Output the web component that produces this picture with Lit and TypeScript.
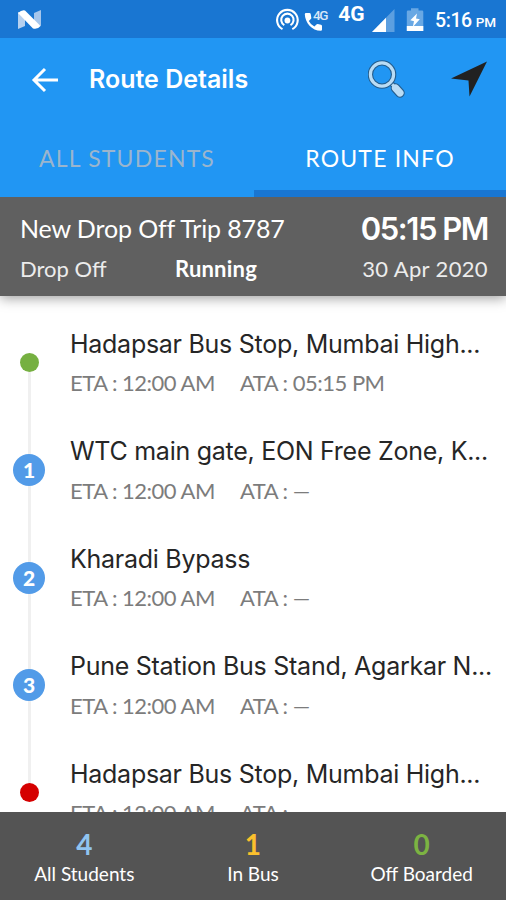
import { LitElement, html, css, nothing } from "lit";

interface Stop {
  name: string;
  eta: string;
  ata: string;
  kind: "start" | "mid" | "end";
  index?: number;
}

const STOPS: Stop[] = [
  { name: "Hadapsar Bus Stop, Mumbai High...", eta: "12:00 AM", ata: "05:15 PM", kind: "start" },
  { name: "WTC main gate, EON Free Zone, K...", eta: "12:00 AM", ata: "—", kind: "mid", index: 1 },
  { name: "Kharadi Bypass", eta: "12:00 AM", ata: "—", kind: "mid", index: 2 },
  { name: "Pune Station Bus Stand, Agarkar N...", eta: "12:00 AM", ata: "—", kind: "mid", index: 3 },
  { name: "Hadapsar Bus Stop, Mumbai High...", eta: "12:00 AM", ata: "—", kind: "end" },
];

class StatusBar extends LitElement {
  static styles = css`
    :host {
      display: flex;
      flex: none;
      height: 38px;
      background: #1976d2;
      color: #fff;
      font-family: Roboto, sans-serif;
    }
    svg { display: block; flex: none; }
    .logo { margin: 9px 0 0 17px; }
    .icons { margin-left: auto; }
    .time {
      display: flex;
      align-items: baseline;
      width: 71px;
      line-height: 41px;
      white-space: nowrap;
      font-size: 19.5px;
      font-weight: 500;
      letter-spacing: -0.4px;
    }
    .half { font-size: 13.5px; margin-left: 4px; letter-spacing: -0.2px; }
    .net { font-family: Roboto, sans-serif; }
  `;
  render() {
    return html`
      <svg class="logo" width="25" height="21" viewBox="0 0 25 21">
        <path d="M1 3 L8 6 V17 L1 20Z" fill="#b5d0ef" />
        <path d="M17 4 L24 1 V17 L17 15Z" fill="#a5c6ec" />
        <path d="M1 4 Q5 .5 8 1.500 L23.500 17 Q21 20.500 16 19.500Z" fill="#fff" />
      </svg>
      <svg class="icons" width="160" height="38" viewBox="0 0 160 38">
        <g fill="none" stroke="#fff" stroke-width="2.100">
          <path d="M7.500 29.200 A10.300 10.300 0 1 1 17.300 29.200" />
          <path d="M9.300 25.200 A6.200 6.200 0 1 1 15.500 25.200" />
        </g>
        <circle cx="12.400" cy="20.500" r="2.900" fill="#fff" />
        <path fill="#fff" d="M31 13 h3.500 q1 0 1.200 1 l.6 3.800 q.1 .8 -.5 1.300 l-2 1.900 q2 3.800 5.600 5.600 l2 -2.100 q.5 -.5 1.300 -.4 l3.300 .6 q1 .2 1 1.200 v3.700 q0 1.200 -1.200 1.200 C37 30.800 30 22.500 29.800 14.200 Q29.800 13 31 13Z" />
        <text class="net" x="38" y="19.500" font-size="13.500" font-weight="500" fill="#d5e6f8" textLength="15.500">4G</text>
        <text class="net" x="63.200" y="21" font-size="21" font-weight="700" fill="#fff" textLength="26.500">4G</text>
        <path d="M119.500 9 V32 H97Z" fill="#5c9fe0" />
        <path d="M111 17.700 V32 H97Z" fill="#fff" />
        <path d="M136 8.300 h7.500 v2.200 h3.600 q1.200 0 1.200 1.200 V31 h-16.500 V11.700 q0 -1.200 1.200 -1.200 h3Z" fill="#69a8e4" />
        <path d="M131.800 26 h16.500 v5 h-16.500Z" fill="#fff" />
        <path d="M142 13.500 L135.300 20.300 L139 21.300 L137.800 27 L144.800 19.300 L141 18.500Z" fill="#fff" />
      </svg>
      <div class="time"><span>5:16</span><span class="half">PM</span></div>
    `;
  }
}
customElements.define("status-bar", StatusBar);

class AppHeader extends LitElement {
  static styles = css`
    :host {
      display: block;
      flex: none;
      background: #2196f3;
      color: #fff;
      white-space: nowrap;
      z-index: 2;
    }
    svg { display: block; flex: none; }
    .bar { display: flex; align-items: center; height: 82px; }
    .back { margin: 1px 0 0 31px; }
    .title {
      flex: 1;
      margin-left: 30px;
      font: 600 25px/30px Inter, sans-serif;
    }
    .search { margin-right: 44px; }
    .nav { margin-right: 18px; }
    .tabs { display: grid; grid-template-columns: 254px 252px; height: 77px; }
    .tab {
      box-sizing: border-box;
      padding-top: 23px;
      border-bottom: 7px solid transparent;
      text-align: center;
      font: 400 23px/30px Lato, sans-serif;
      letter-spacing: 1.2px;
      color: #9bb5cd;
    }
    .active { color: #fff; border-color: #1976d2; }
  `;
  render() {
    return html`
      <div class="bar">
        <svg class="back" width="28" height="28" viewBox="0 0 28 28">
          <path d="M14 3 L3 14 L14 25 M3 14 H27" fill="none" stroke="#fff" stroke-width="3" />
        </svg>
        <div class="title">Route Details</div>
        <svg class="search" width="38" height="38" viewBox="0 0 38 38">
          <path d="M23.500 23.500 L27.500 28" stroke="#245d8d" stroke-width="5.400" />
          <path d="M27.500 28 L32 33" stroke="#245d8d" stroke-width="9.500" stroke-linecap="round" />
          <path d="M22.500 22.500 L27.500 28" stroke="#b9dcf5" stroke-width="3" />
          <path d="M27.500 28 L32 33" stroke="#b9dcf5" stroke-width="7.200" stroke-linecap="round" />
          <circle cx="14" cy="14.500" r="11.600" fill="none" stroke="#245d8d" stroke-width="5.400" />
          <circle cx="14" cy="14.500" r="11.600" fill="none" stroke="#b9dcf5" stroke-width="3.200" />
        </svg>
        <svg class="nav" width="38" height="38" viewBox="0 0 38 38">
          <path d="M37 1.500 L19.500 36.500 L18.500 20.500 L1 18.500Z" fill="#212121" />
        </svg>
      </div>
      <div class="tabs">
        <div class="tab">ALL STUDENTS</div>
        <div class="tab active">ROUTE INFO</div>
      </div>
    `;
  }
}
customElements.define("app-header", AppHeader);

class TripSummary extends LitElement {
  static styles = css`
    :host {
      display: block;
      flex: none;
      box-sizing: border-box;
      height: 99px;
      padding: 12px 18px 0 20px;
      background: #606060;
      color: #fff;
      box-shadow: 0 2px 12px rgba(0, 0, 0, 0.4);
      font-family: Lato, sans-serif;
      white-space: nowrap;
      z-index: 1;
    }
    .row { display: flex; height: 40px; line-height: 40px; }
    .name { font-size: 25px; line-height: 38px; letter-spacing: -0.12px; }
    .time {
      margin-left: auto;
      font: 600 31px/40px Inter, sans-serif;
      letter-spacing: -1.45px;
    }
    .sub { font-size: 22px; color: #ececec; }
    .kind { width: 155px; }
    .state { color: #fff; font-weight: 700; letter-spacing: 0.2px; }
    .date { margin-left: auto; letter-spacing: 0.36px; }
  `;
  render() {
    return html`
      <div class="row">
        <span class="name">New Drop Off Trip 8787</span><span class="time">05:15 PM</span>
      </div>
      <div class="row sub">
        <span class="kind">Drop Off</span><span class="state">Running</span><span class="date">30 Apr 2020</span>
      </div>
    `;
  }
}
customElements.define("trip-summary", TripSummary);

class StopRow extends LitElement {
  static properties = { stop: { attribute: false } };
  declare stop: Stop;
  static styles = css`
    :host { display: flex; flex: none; height: 107.6px; white-space: nowrap; }
    .rail { display: flex; flex-direction: column; align-items: center; width: 58px; margin-right: 12px; }
    .line { flex: 1; width: 3px; background: #f0f0f0; }
    .hidden { visibility: hidden; }
    .dot {
      width: 19px;
      height: 19px;
      border-radius: 50%;
      margin: -1px 0;
      z-index: 1;
    }
    .start { background: #76b041; }
    .end { background: #d50000; }
    .mid {
      width: 32px;
      height: 32px;
      background: #529be8;
      color: #fff;
      text-align: center;
      font: 900 21px/31px Lato, sans-serif;
    }
    .name {
      padding-top: 20px;
      font: 400 25px/30px Inter, sans-serif;
      letter-spacing: -0.27px;
      color: #262626;
    }
    .times {
      display: flex;
      margin-top: 9.4px;
      font: 400 22px/30px Lato, sans-serif;
      letter-spacing: -0.5px;
      color: #7c7c7c;
    }
    .eta { width: 170px; }
  `;
  render() {
    const s = this.stop;
    return html`
      <div class="rail">
        <div class="line ${s.kind === "start" ? "hidden" : ""}"></div>
        <div class="dot ${s.kind}">${s.index ?? nothing}</div>
        <div class="line ${s.kind === "end" ? "hidden" : ""}"></div>
      </div>
      <div>
        <div class="name">${s.name}</div>
        <div class="times"><span class="eta">ETA : ${s.eta}</span><span>ATA : ${s.ata}</span></div>
      </div>
    `;
  }
}
customElements.define("stop-row", StopRow);

class CountFooter extends LitElement {
  static styles = css`
    :host {
      display: grid;
      grid-template-columns: repeat(3, 1fr);
      flex: none;
      height: 88px;
      background: #545454;
      color: #fff;
      text-align: center;
      font-family: Lato, sans-serif;
      white-space: nowrap;
    }
    .num { padding-top: 17px; font-size: 28px; line-height: 30px; font-weight: 700; }
    .label { font-size: 19px; line-height: 30px; }
    .blue { color: #90c4f0; }
    .amber { color: #fbc02d; }
    .green { color: #7cb342; }
  `;
  render() {
    const cells: [string, string, string][] = [
      ["4", "All Students", "blue"],
      ["1", "In Bus", "amber"],
      ["0", "Off Boarded", "green"],
    ];
    return html`${cells.map(
      ([n, label, tone]) => html`<div><div class="num ${tone}">${n}</div><div class="label">${label}</div></div>`
    )}`;
  }
}
customElements.define("count-footer", CountFooter);

class AppRoot extends LitElement {
  static styles = css`
    :host {
      display: flex;
      flex-direction: column;
      width: 506px;
      height: 900px;
      overflow: hidden;
      background: #fff;
    }
    .list {
      display: flex;
      flex-direction: column;
      flex: 1;
      min-height: 0;
      padding-top: 12.6px;
      box-sizing: border-box;
      overflow: hidden;
    }
  `;
  render() {
    return html`
      <status-bar></status-bar>
      <app-header></app-header>
      <trip-summary></trip-summary>
      <div class="list">${STOPS.map((s) => html`<stop-row .stop=${s}></stop-row>`)}</div>
      <count-footer></count-footer>
    `;
  }
}
customElements.define("app-root", AppRoot);
